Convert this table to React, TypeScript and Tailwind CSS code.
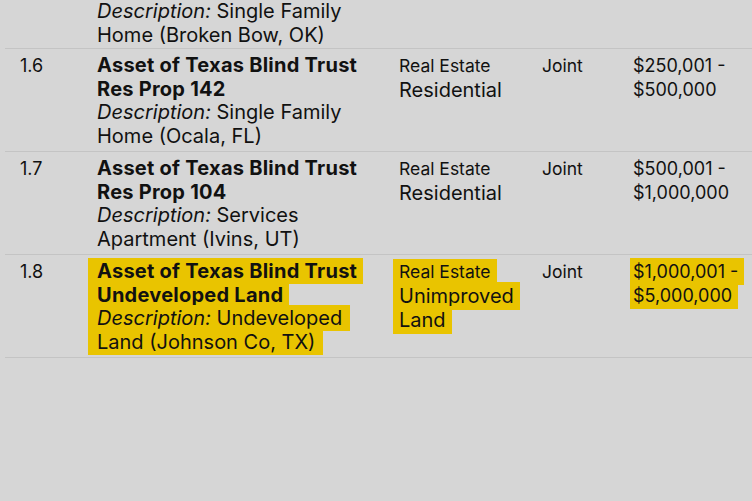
import React from "react";

type Row = {
  num?: string;
  title?: string[];
  desc?: string[];
  type?: string[];
  owner?: string;
  value?: string[];
  flagged?: boolean;
};

const rows: Row[] = [
  { desc: ["Single Family", "Home (Broken Bow, OK)"] },
  {
    num: "1.6",
    title: ["Asset of Texas Blind Trust", "Res Prop 142"],
    desc: ["Single Family", "Home (Ocala, FL)"],
    type: ["Real Estate", "Residential"],
    owner: "Joint",
    value: ["$250,001 -", "$500,000"],
  },
  {
    num: "1.7",
    title: ["Asset of Texas Blind Trust", "Res Prop 104"],
    desc: ["Services", "Apartment (Ivins, UT)"],
    type: ["Real Estate", "Residential"],
    owner: "Joint",
    value: ["$500,001 -", "$1,000,000"],
  },
  {
    num: "1.8",
    title: ["Asset of Texas Blind Trust", "Undeveloped Land"],
    desc: ["Undeveloped", "Land (Johnson Co, TX)"],
    type: ["Real Estate", "Unimproved", "Land"],
    owner: "Joint",
    value: ["$1,000,001 -", "$5,000,000"],
    flagged: true,
  },
];

// line-wise highlight, like a marker over the text
function Mark({ on, pl, pr, className, children }: { on?: boolean; pl: string; pr: string; className?: string; children: React.ReactNode }) {
  if (!on) return <span className={className}>{children}</span>;
  return (
    <span className={`bg-[#e9c400] box-decoration-clone ${pl} ${pr} ${className ?? ""}`}>{children}</span>
  );
}

function LineList({ lines }: { lines: string[] }) {
  return (
    <>
      {lines.map((l, i) => (
        <React.Fragment key={i}>
          {i > 0 && <br />}
          {l}
        </React.Fragment>
      ))}
    </>
  );
}

export default function App() {
  return (
    <div
      className="w-[752px] h-[501px] overflow-hidden bg-[#d6d6d6] text-[#111] whitespace-nowrap"
      style={{ fontFamily: "Inter, 'Open Sans', sans-serif" }}
    >
      <div className="ml-[5px]">
        {rows.map((r, idx) => (
          <div
            key={idx}
            className={`grid grid-cols-[92px_302px_143px_91px_1fr] border-b border-[#c4c4c4] ${idx === 0 ? "pb-[1px]" : "pt-[5px] pb-[3px]"}`}
          >
            {/* number */}
            <div className="pl-[15px] text-[18px] leading-[23.5px]">{r.num}</div>

            {/* asset name + description */}
            <div className={r.flagged ? "-ml-[9px]" : ""}>
              {r.title && (
                <div className="text-[20px] leading-[23.5px] font-bold tracking-[0.25px]">
                  <Mark on={r.flagged} pl="pl-[9px]" pr="pr-[6px]" className="py-px">
                    <LineList lines={r.title} />
                  </Mark>
                </div>
              )}
              {r.desc && (
                <div className="text-[20px] leading-[23.5px]">
                  <Mark on={r.flagged} pl="pl-[9px]" pr="pr-[8px]" className="py-px">
                    <em>Description:</em> <LineList lines={r.desc} />
                  </Mark>
                </div>
              )}
            </div>

            {/* type */}
            <div className={r.flagged ? "-ml-[6px]" : ""}>
              {r.type && (
                <div className="leading-[23.5px]">
                  {r.type.map((t, i) => (
                    <div key={i}>
                      <Mark
                        on={r.flagged}
                        pl="pl-[6px]"
                        pr="pr-[6px]"
                        className={`${i === 0 ? "text-[17.5px]" : "text-[20px]"} py-[2px]`}
                      >
                        {t}
                      </Mark>
                    </div>
                  ))}
                </div>
              )}
            </div>

            {/* owner */}
            <div className="text-[17.5px] leading-[23.5px]">{r.owner}</div>

            {/* value */}
            <div className={r.flagged ? "-ml-[3px]" : ""}>
              {r.value && (
                <div className="text-[18px] leading-[23.5px]">
                  <Mark on={r.flagged} pl="pl-[3px]" pr="pr-[6px]" className="py-[3px]">
                    <LineList lines={r.value} />
                  </Mark>
                </div>
              )}
            </div>
          </div>
        ))}
      </div>
    </div>
  );
}
